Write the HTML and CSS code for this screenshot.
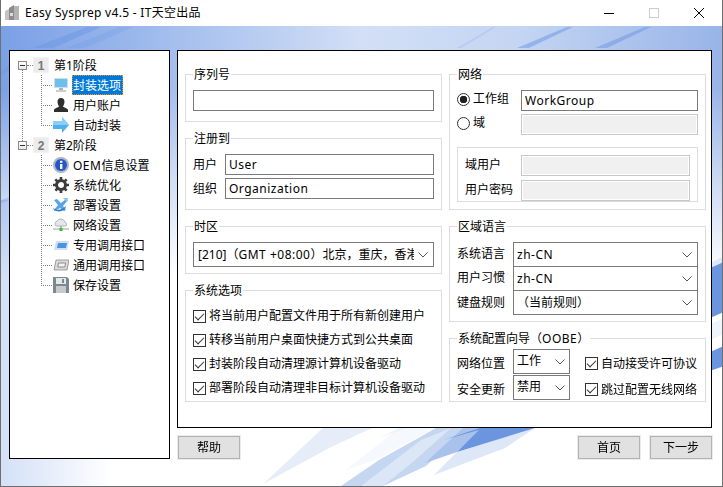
FILE: index.html
```html
<!DOCTYPE html>
<html lang="zh-CN">
<head>
<meta charset="utf-8">
<title>Easy Sysprep v4.5</title>
<link rel="stylesheet" href="styles.css">
</head>
<body>
<div class="window">
  <header class="titlebar">
    <svg class="app-icon" width="14" height="16" viewBox="0 0 14 16"><path d="M0 6 4 4v11H0z" fill="#c4c4c4"/><path d="M4 3l5-3v15H4z" fill="#8c8c8c"/><path d="M9 1h5v14H9z" fill="#b4b4b4"/><path d="M5 8h3v3H5z" fill="#dcdcdc"/></svg>
    <span class="title">Easy Sysprep v4.5 - IT天空出品</span>
    <div class="caption">
      <svg class="cap-btn" width="10" height="10" viewBox="0 0 10 10"><path d="M0 5.500h10" stroke="#000" fill="none"/></svg>
      <svg class="cap-btn" width="10" height="10" viewBox="0 0 10 10"><rect x=".5" y=".5" width="9" height="9" fill="none" stroke="#ccc"/></svg>
      <svg class="cap-btn" width="10" height="10" viewBox="0 0 10 10"><path d="M0 0l10 10M10 0 0 10" stroke="#000" fill="none"/></svg>
    </div>
  </header>

  <div class="client">
    <svg class="backdrop" width="721" height="460" viewBox="0 26 721 460" aria-hidden="true">
      <defs>
        <linearGradient id="band" x1="0" x2="1" y1="0" y2="0">
          <stop offset="0" stop-color="#7aa0e6"/>
          <stop offset=".5" stop-color="#d2dff6"/>
          <stop offset=".72" stop-color="#c4d5f3"/>
          <stop offset="1" stop-color="#98b4e8"/>
        </linearGradient>
        <linearGradient id="fade" x1="0" x2="0" y1="0" y2="1">
          <stop offset="0" stop-color="#fff"/>
          <stop offset=".25" stop-color="#fff"/>
          <stop offset="1" stop-color="#000"/>
        </linearGradient>
        <mask id="bandmask"><rect x="0" y="26" width="721" height="250" fill="url(#fade)"/></mask>
        <linearGradient id="corner" x1="0" x2="1" y1="0" y2="0">
          <stop offset="0" stop-color="#d3e0f7"/>
          <stop offset="1" stop-color="#fff"/>
        </linearGradient>
      </defs>
      <rect x="0" y="200" width="110" height="286" fill="url(#corner)"/>
      <rect x="0" y="26" width="721" height="250" fill="url(#band)" mask="url(#bandmask)"/>
      <g fill="#6f9ae2" opacity=".55">
        <path d="M32 48 86 27h14L52 48z"/>
        <path d="M66 48 118 27h14L84 48z" opacity=".5"/>
        <path d="M516 48 566 27h6L528 48z"/>
        <path d="M594 48 644 27h6L606 48z"/>
        <path d="M456 48 492 27h3L460 48z" opacity=".35"/>
        <path d="M0 72 12 62v6L0 76zM0 200l12-4v3L0 203z" opacity=".6"/>
      </g>
      <path d="M700 268 723 256v6L700 272z" fill="#dfe8f8"/>
      <path d="M700 272 723 262v50L700 322z" fill="#6b96df"/>
      <path d="M700 328 723 318v16L700 344z" fill="#f0f4fc"/>
      <path d="M700 356 723 346v20L700 374z" fill="#6b96df"/>
      <path d="M262 484 322 428h49l-41 19z" fill="#e6edf8"/>
      <path d="M345 470 398 428h36l-60 32z" fill="#f5f8fd"/>
      <path d="M378 438l20-10h8z" fill="#eef3fb"/>
      <path d="M340 486 378 460l57-32h30l-40 38-43 20z" fill="#c5d6f1"/>
      <path d="M360 486 420 440l30-12-38 34-30 24z" fill="#dbe6f6"/>
      <path d="M433 475l23-23 78-24-30 20z" fill="#dde7f7"/>
      <path d="M424 463 462 428h20l-26 24z" fill="#a9c2ec"/>
      <path d="M442 440 479 428h55l-78 24 22-22z" fill="#6b96df"/>
    </svg>

    <nav class="tree">
      <div class="root-group">
        <div class="row root"><span class="expander"></span><span class="dash"></span><span class="step">1</span><span class="node">第1阶段</span></div>
        <div class="branch">
          <div class="row child">
            <svg class="ico" viewBox="0 0 16 16"><rect x="1" y="1" width="14" height="10" fill="#d4dbe2"/><rect x="2" y="2" width="12" height="8" fill="#6cc0ee"/><path d="M6 11h4v2H6z" fill="#a8b0b8"/><path d="M3 13h10v2H3z" fill="#c8ced4"/></svg>
            <span class="node selected">封装选项</span>
          </div>
          <div class="row child">
            <svg class="ico" viewBox="0 0 16 16"><path d="M8 1c2.300 0 3.500 1.700 3.500 3.800S10.300 9 10 9.500c0 .8 4.500 1.600 5 3.500v2H1v-2c.5-1.900 5-2.700 5-3.500C5.700 9 4.500 7 4.500 4.800S5.700 1 8 1z" fill="#2e2e2e"/></svg>
            <span class="node">用户账户</span>
          </div>
          <div class="row child">
            <svg class="ico" viewBox="0 0 16 16"><path d="M9 0l7 8-7 8v-4H0V4h9z" fill="#4fb0ee"/><path d="M9 0l7 8H0V4h9z" fill="#8ccdf5"/></svg>
            <span class="node">自动封装</span>
          </div>
        </div>
      </div>
      <div class="row root"><span class="expander"></span><span class="dash"></span><span class="step">2</span><span class="node">第2阶段</span></div>
      <div class="branch">
        <div class="row child">
          <svg class="ico" viewBox="0 0 16 16"><circle cx="8" cy="8" r="8" fill="#aeb6c4"/><circle cx="8" cy="8" r="6" fill="#2458c8"/><rect x="7" y="7" width="2.400" height="5" fill="#fff"/><rect x="7" y="3.800" width="2.400" height="2" fill="#fff"/></svg>
          <span class="node"><span class="latin">OEM</span>信息设置</span>
        </div>
        <div class="row child">
          <svg class="ico" viewBox="0 0 16 16"><circle cx="8" cy="8" r="4.500" fill="none" stroke="#3c3c3c" stroke-width="3"/><path d="M8 0v16M0 8h16M2.300 2.300l11.400 11.400M13.700 2.300 2.300 13.700" stroke="#3c3c3c" stroke-width="2.600" stroke-dasharray="3 10 3"/></svg>
          <span class="node">系统优化</span>
        </div>
        <div class="row child">
          <svg class="ico" viewBox="0 0 16 16"><path d="M1 3l3-1 4 4 5-4 2 1-5 6 3 4-2 1-4-3-5 3-1-1 4-5z" fill="#5aa4e6"/><path d="M0 11c4 3 9 2 13-2l-1 3c-3 3-8 3-11 1z" fill="#2f7fd0"/><path d="M10 1l5 0-1 4z" fill="#8cc4ee"/></svg>
          <span class="node">部署设置</span>
        </div>
        <div class="row child">
          <svg class="ico" viewBox="0 0 16 16"><path d="M3 9a3 3 0 0 1 1-5 4.500 4.500 0 0 1 8 1 2.500 2.500 0 0 1 1 4z" fill="#e4e6ea" stroke="#a0a6ae" stroke-width=".8"/><path d="M0 12h16" stroke="#9ca0a6"/><path d="M8 9v3" stroke="#3aa53a"/><rect x="6.500" y="11" width="3" height="3" fill="#46b046"/></svg>
          <span class="node">网络设置</span>
        </div>
        <div class="row child">
          <svg class="ico" viewBox="0 0 16 16"><path d="M3 4h13l-2 9H1z" fill="#cfe0f4"/><path d="M5 6h9l-1 5H4z" fill="#4a94dc"/></svg>
          <span class="node">专用调用接口</span>
        </div>
        <div class="row child">
          <svg class="ico" viewBox="0 0 16 16"><path d="M3 3h13l-2 10H1z" fill="#dadada" stroke="#8a8a8a" stroke-width=".8"/><path d="M5.500 6h7l-.6 4H4.800z" fill="#f2f2f2" stroke="#777" stroke-width=".8"/></svg>
          <span class="node">通用调用接口</span>
        </div>
        <div class="row child">
          <svg class="ico" viewBox="0 0 16 16"><path d="M0 0h14l2 2v14H0z" fill="#7c8890"/><rect x="3" y="1" width="10" height="6" fill="#e6e9ec"/><rect x="3" y="9" width="10" height="7" fill="#c4cace"/><rect x="9" y="2" width="2" height="4" fill="#7c8890"/></svg>
          <span class="node">保存设置</span>
        </div>
      </div>
    </nav>

    <div class="content">
      <main class="panel">
        <div class="col">
          <fieldset class="group">
            <legend>序列号</legend>
            <input class="field top-8" type="text">
          </fieldset>
          <fieldset class="group">
            <legend>注册到</legend>
            <div class="form top-8">
              <label>用户</label><input class="field" type="text" value="User">
              <label>组织</label><input class="field" type="text" value="Organization">
            </div>
          </fieldset>
          <fieldset class="group tight">
            <legend>时区</legend>
            <div class="select tzbox top-8"><span class="sel-text tz">[210]（<span class="latin">GMT +08:00</span>）北京，重庆，香港</span><svg class="chev" width="10" height="6" viewBox="0 0 10 6"><path d="M.5.5 5 5 9.500.5" fill="none" stroke="#555"/></svg></div>
          </fieldset>
          <fieldset class="group options">
            <legend>系统选项</legend>
            <label class="check"><input type="checkbox" checked>将当前用户配置文件用于所有新创建用户</label>
            <label class="check"><input type="checkbox" checked>转移当前用户桌面快捷方式到公共桌面</label>
            <label class="check"><input type="checkbox" checked>封装阶段自动清理源计算机设备驱动</label>
            <label class="check"><input type="checkbox" checked>部署阶段自动清理非目标计算机设备驱动</label>
          </fieldset>
        </div>
        <div class="col">
          <fieldset class="group net">
            <legend>网络</legend>
            <div class="net-grid top-8">
              <label class="radio"><input type="radio" name="net" checked>工作组</label><input class="field" type="text" value="WorkGroup">
              <label class="radio"><input type="radio" name="net">域</label><input class="field off" type="text" disabled>
            </div>
            <div class="domain">
              <label>域用户</label><input class="field off" type="text" disabled>
              <label>用户密码</label><input class="field off" type="text" disabled>
            </div>
          </fieldset>
          <fieldset class="group tight">
            <legend>区域语言</legend>
            <div class="locale top-8">
              <label>系统语言</label><div class="select"><span class="sel-text latin">zh-CN</span><svg class="chev" width="10" height="6" viewBox="0 0 10 6"><path d="M.5.5 5 5 9.500.5" fill="none" stroke="#555"/></svg></div>
              <label>用户习惯</label><div class="select"><span class="sel-text latin">zh-CN</span><svg class="chev" width="10" height="6" viewBox="0 0 10 6"><path d="M.5.5 5 5 9.500.5" fill="none" stroke="#555"/></svg></div>
              <label>键盘规则</label><div class="select"><span class="sel-text">（当前规则）</span><svg class="chev" width="10" height="6" viewBox="0 0 10 6"><path d="M.5.5 5 5 9.500.5" fill="none" stroke="#555"/></svg></div>
            </div>
          </fieldset>
          <fieldset class="group oobe">
            <legend>系统配置向导（<span class="latin">OOBE</span>）</legend>
            <div class="oobe-grid">
              <label class="low">网络位置</label>
              <div class="select small"><span class="sel-text raised">工作</span><svg class="chev" width="10" height="6" viewBox="0 0 10 6"><path d="M.5.5 5 5 9.500.5" fill="none" stroke="#555"/></svg></div>
              <label class="check"><input type="checkbox" checked>自动接受许可协议</label>
              <label class="low">安全更新</label>
              <div class="select small"><span class="sel-text raised">禁用</span><svg class="chev" width="10" height="6" viewBox="0 0 10 6"><path d="M.5.5 5 5 9.500.5" fill="none" stroke="#555"/></svg></div>
              <label class="check"><input type="checkbox" checked>跳过配置无线网络</label>
            </div>
          </fieldset>
        </div>
      </main>
      <footer class="actions">
        <button class="btn" type="button">帮助</button>
        <span class="spacer"></span>
        <button class="btn" type="button">首页</button>
        <button class="btn" type="button">下一步</button>
      </footer>
    </div>
  </div>
</div>
</body>
</html>
```
FILE: styles.css
```css
* { box-sizing: border-box; }
html, body { margin: 0; padding: 0; }
body {
  width: 723px;
  height: 487px;
  overflow: hidden;
  background: #fff;
  color: #000;
  font: 12px/16px "Noto Sans", "Noto Sans CJK SC", sans-serif;
}
.latin { letter-spacing: .5px; }
.window {
  width: 723px;
  height: 487px;
  display: flex;
  flex-direction: column;
  border: 1px solid #6e6e6e;
  border-top: 0;
  background: #fff;
}
.titlebar {
  height: 26px;
  flex: none;
  display: flex;
  align-items: center;
  padding-left: 4px;
  background: #fff;
}
.app-icon { margin-right: 6px; }
.title { font-size: 12px; line-height: 26px; letter-spacing: .3px; white-space: nowrap; }
.caption {
  margin-left: auto;
  display: flex;
  gap: 35px;
  padding-right: 18px;
}
.cap-btn { display: block; }

.client {
  position: relative;
  flex: 1;
  display: flex;
  gap: 7px;
  padding: 24px 0 0 8px;
  min-height: 0;
}
.backdrop { position: absolute; left: 0; top: 0; }

/* tree */
.tree {
  position: relative;
  width: 161px;
  height: 409px;
  flex: none;
  padding: 4px 0 0 8px;
  background: #fff;
  border: 1px solid #000;
}
.root-group { position: relative; }
.root-group::before {
  content: "";
  position: absolute;
  left: 4px;
  top: 15px;
  height: 71px;
  border-left: 1px dotted #808080;
}
.row { display: flex; align-items: center; height: 20px; white-space: nowrap; }
.expander {
  position: relative;
  width: 9px;
  height: 9px;
  flex: none;
  background: linear-gradient(#fff, #e8e8e8);
  border: 1px solid #8a8a8a;
}
.expander::after {
  content: "";
  position: absolute;
  left: 1px;
  right: 1px;
  top: 3px;
  height: 1px;
  background: #333;
}
.dash { width: 6px; flex: none; border-top: 1px dotted #808080; }
.step {
  width: 16px;
  height: 16px;
  flex: none;
  margin-right: 5px;
  text-align: center;
  font: bold 12px/16px "Liberation Sans", sans-serif;
  color: #777;
  background: #ececec;
  border: 1px solid #f2f2f2;
}
.branch { position: relative; padding-left: 35px; }
.branch::before {
  content: "";
  position: absolute;
  left: 23px;
  top: 0;
  bottom: 9px;
  border-left: 1px dotted #808080;
}
.child { position: relative; }
.child::before {
  content: "";
  position: absolute;
  left: -12px;
  top: 10px;
  width: 11px;
  border-top: 1px dotted #808080;
}
.ico { width: 16px; height: 16px; flex: none; margin-right: 3px; }
.node { padding: 0 2px 0 1px; line-height: 21px; height: 20px; }
.root .node { padding: 0; }
.selected {
  background: #0078d7;
  color: #fff;
  outline: 1px dotted #e8912c;
  outline-offset: -1px;
}

/* main */
.content {
  position: relative;
  width: 535px;
  flex: none;
  display: flex;
  flex-direction: column;
}
.panel {
  height: 378px;
  flex: none;
  display: grid;
  grid-template-columns: 257px 257px;
  column-gap: 7px;
  padding: 15px 0 0 7px;
  background: #fff;
  border: 1px solid #000;
}
.col { display: flex; flex-direction: column; gap: 8px; }
.group {
  margin: 0;
  min-width: 0;
  padding: 0 7px 10px;
  border: 1px solid #dcdcdc;
}
.tight { padding-bottom: 6px; }
legend {
  height: 16px;
  line-height: 18px;
  padding: 0 1px;
  margin: 0;
  white-space: nowrap;
}
.field {
  display: block;
  width: 100%;
  height: 21px;
  margin: 0;
  padding: 0 3px;
  font: inherit;
  letter-spacing: .5px;
  color: #000;
  background: #fff;
  border: 1px solid #7a7a7a;
  border-radius: 0;
  outline: 0;
}
.top-8 { margin-top: 8px; }
.off { background: #f0f0f0; border: 1px solid #c8c8c8; box-shadow: inset 0 0 0 1px #fff; }
.form {
  display: grid;
  grid-template-columns: 32px 1fr;
  row-gap: 3px;
  align-items: center;
}
.select {
  display: flex;
  align-items: center;
  height: 25px;
  padding: 0 5px 0 3px;
  background: #fff;
  border: 1px solid #7a7a7a;
}
.tzbox { padding-left: 4px; }
.sel-text { flex: 1; min-width: 0; overflow: hidden; white-space: nowrap; }
.tz { margin-right: 1px; }
.chev { flex: none; margin-left: 3px; }
.raised { margin-top: -2px; }

.options { padding-bottom: 1px; }
.options .check:first-of-type { margin-top: 6px; }
.check {
  display: flex;
  align-items: center;
  height: 24px;
  white-space: nowrap;
  gap: 3px;
}
input[type="checkbox"] {
  position: relative;
  appearance: none;
  width: 13px;
  height: 13px;
  flex: none;
  margin: 0;
  background: #fff;
  border: 1px solid #333;
  border-radius: 0;
}
input[type="checkbox"]::before {
  content: "";
  position: absolute;
  left: 1px;
  top: 2px;
  width: 8px;
  height: 4px;
  border-left: 1px solid #333;
  border-bottom: 1px solid #333;
  transform: rotate(-45deg);
}
input[type="radio"] {
  appearance: none;
  width: 13px;
  height: 13px;
  flex: none;
  margin: 0;
  background: #fff;
  border: 1px solid #333;
  border-radius: 50%;
}
input[type="radio"]:checked {
  background: radial-gradient(circle, #222 0 3.500px, #fff 4px);
}
.radio { display: flex; align-items: center; gap: 3px; white-space: nowrap; margin-top: -3px; }
.net { padding-bottom: 7px; }
.net-grid {
  display: grid;
  grid-template-columns: 64px 177px;
  row-gap: 3px;
  align-items: center;
}
.domain {
  display: grid;
  grid-template-columns: 56px 169px;
  row-gap: 3px;
  align-items: center;
  height: 55px;
  margin-top: 12px;
  padding: 6px 7px 0;
  border: 1px solid #dcdcdc;
}
.locale {
  display: grid;
  grid-template-columns: 56px 185px;
  align-items: center;
}
.locale .select { margin-bottom: -1px; }
.locale .select:last-child { margin-bottom: 0; }
.oobe { padding-bottom: 1px; }
.oobe-grid {
  display: grid;
  grid-template-columns: 56px 57px 1fr;
  row-gap: 1px;
  margin-top: 3px;
}
.small { padding-right: 4px; }
.low { align-self: end; line-height: 20px; }
.oobe-grid .check { padding-left: 15px; height: 25px; padding-top: 4px; }

/* footer */
.actions {
  display: flex;
  gap: 8px;
  margin: 7px -1px 0 0;
}
.spacer { flex: 1; }
.btn {
  width: 64px;
  height: 25px;
  padding: 0;
  font: inherit;
  color: #000;
  background: #e1e1e1;
  border: 1px solid #ececec;
  box-shadow: inset 0 0 0 1px #b2b2b2;
  border-radius: 0;
}
```
